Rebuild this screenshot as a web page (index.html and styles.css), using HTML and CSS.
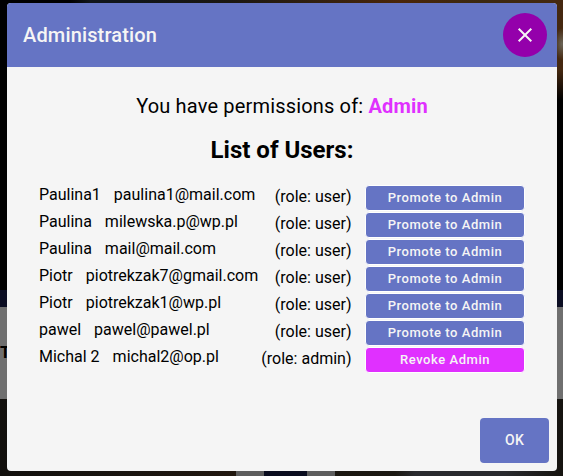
FILE: index.html
```html
<!DOCTYPE html>
<html lang="en"><head><meta charset="utf-8"><title>Administration</title><link rel="stylesheet" href="styles.css"></head>
<body>
<div class="page" aria-hidden="true">
<div class="hero"></div><div class="strip"></div><div class="heading">T</div>
<div class="gallery"><div class="photo"></div><div class="gap"></div><div class="photo warm"></div></div>
</div>
<main class="dialog">
<header class="bar"><h1>Administration</h1><button class="close" aria-label="Close"><svg viewBox="0 0 24 24" width="24" height="24"><path fill="none" stroke="#f5f5f5" stroke-width="2" d="M5.7 5.7 18.3 18.3M18.3 5.7 5.7 18.3"/></svg></button></header>
<section class="content">
<p class="perm">You have permissions of: <b>Admin</b></p>
<h2>List of Users:</h2>
<ul class="users">
<li><span class="name">Paulina1</span><span class="mail">paulina1@mail.com</span><span class="role">(role: user)</span><button>Promote to Admin</button></li>
<li><span class="name">Paulina</span><span class="mail">milewska.p@wp.pl</span><span class="role">(role: user)</span><button>Promote to Admin</button></li>
<li><span class="name">Paulina</span><span class="mail">mail@mail.com</span><span class="role">(role: user)</span><button>Promote to Admin</button></li>
<li><span class="name">Piotr</span><span class="mail">piotrekzak7@gmail.com</span><span class="role">(role: user)</span><button>Promote to Admin</button></li>
<li><span class="name">Piotr</span><span class="mail">piotrekzak1@wp.pl</span><span class="role">(role: user)</span><button>Promote to Admin</button></li>
<li><span class="name">pawel</span><span class="mail">pawel@pawel.pl</span><span class="role">(role: user)</span><button>Promote to Admin</button></li>
<li><span class="name">Michal 2</span><span class="mail">michal2@op.pl</span><span class="role">(role: admin)</span><button class="revoke">Revoke Admin</button></li>
</ul>
</section>
<footer><button class="ok">OK</button></footer>
</main>
</body></html>
```
FILE: styles.css
```css
* { box-sizing: border-box; }
body { margin: 0; height: 476px; padding: 3px 6px 5px 7px; overflow: hidden; background: #000; font-family: Roboto, sans-serif; color: #000; }
button { border: 0; padding: 0; font-family: inherit; color: #f5f5f5; }
.page { position: absolute; inset: 0; display: flex; flex-direction: column; overflow: hidden; }
.hero { height: 290px; background: radial-gradient(ellipse 8px 16px at 562px 44px, #6b6558, #6b655800), linear-gradient(#0000 70px, #000 100px), linear-gradient(90deg, #000 0 70px, #11151a 90px 130px, #1b1711 230px, #33200f 320px, #4a2508 400px, #3b2810 480px, #452810 563px); }
.strip { height: 17px; background: #0b0d22; }
.heading { height: 92px; padding-top: 34px; background: #6f6f6f; font-size: 17px; line-height: 22px; font-weight: 700; }
.gallery { flex: 1; display: flex; }
.photo { width: 236px; background: linear-gradient(90deg, #12100d, #1a1510 130px, #21170f); }
.photo.warm { flex: 1; background: linear-gradient(90deg, #1b1710, #1b1812 60px, #292a2e 80px 170px, #15130f); }
.gap { width: 99px; background: #090c1e; border: solid #5d5d5d; border-width: 0 28px; }
.dialog { position: relative; display: flex; flex-direction: column; height: 468px; background: #f5f5f5; border-radius: 4px; overflow: hidden; }
.bar { display: flex; align-items: center; justify-content: space-between; height: 64px; padding: 0 10px 0 16px; background: #6574c4; color: #f5f5f5; }
h1 { margin: 0; font-size: 20px; font-weight: 500; letter-spacing: .15px; }
.close { width: 44px; height: 44px; border-radius: 50%; background: #9400ab; display: flex; align-items: center; justify-content: center; }
.content { flex: 1; padding: 24px 32px 0; }
.perm { margin: 0; font-size: 20px; line-height: 30px; text-align: center; letter-spacing: .17px; }
.perm b { color: #e030ff; }
h2 { margin: 14px 0 0; font-size: 24px; line-height: 30px; text-align: center; }
.users { list-style: none; margin: 18px 0 0; padding: 0; }
.users li { display: flex; height: 27px; align-items: flex-start; font-size: 16px; line-height: 24px; white-space: nowrap; }
.mail { margin-left: 13px; }
.role { margin-left: auto; margin-right: 13.5px; padding-top: 2px; }
.users button { width: 160px; height: 26px; margin-top: 2px; padding-bottom: 2px; border: 1px solid #fff; border-radius: 4px; background: #6574c4; font-size: 13px; font-weight: 500; letter-spacing: .55px; }
.users .revoke { background: #e030ff; }
footer { display: flex; justify-content: flex-end; padding: 8px; }
.ok { width: 69px; height: 45px; padding-bottom: 1px; border-radius: 4px; background: #6574c4; font-size: 14px; font-weight: 500; letter-spacing: .2px; }
```
